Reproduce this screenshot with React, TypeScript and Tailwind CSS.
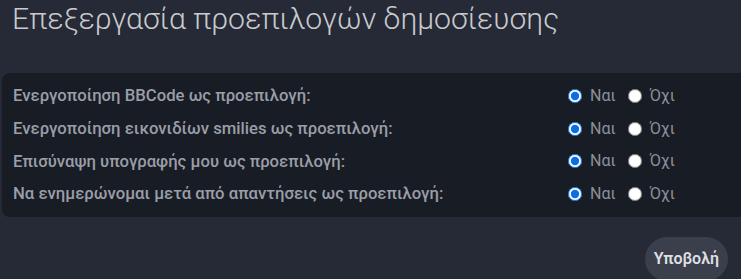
import { useState } from "react";

const options = [
  { id: "bbcode", label: "Ενεργοποίηση BBCode ως προεπιλογή:" },
  { id: "smilies", label: "Ενεργοποίηση εικονιδίων smilies ως προεπιλογή:" },
  { id: "sig", label: "Επισύναψη υπογραφής μου ως προεπιλογή:" },
  { id: "notify", label: "Να ενημερώνομαι μετά από απαντήσεις ως προεπιλογή:" },
];

function OptionRow({ id, label }: { id: string; label: string }) {
  const [value, setValue] = useState(true);
  return (
    <div className="flex flex-row items-center h-[32.7px]">
      <p className="pl-[11px] flex-1 font-medium text-[16.7px] text-[#9a9ea7]">{label}</p>
      <div className="flex flex-row items-center w-[173px] text-[16px] text-[#8d9099]">
        <label className="flex items-center gap-[8px] mr-[12px]">
          <input
            type="radio"
            name={id}
            checked={value}
            onChange={() => setValue(true)}
            className="m-0 w-[14px] h-[14px] accent-[#0b6ee3]"
          />
          Ναι
        </label>
        <label className="flex items-center gap-[8px]">
          <input
            type="radio"
            name={id}
            checked={!value}
            onChange={() => setValue(false)}
            className="m-0 w-[14px] h-[14px] accent-[#0b6ee3]"
          />
          Όχι
        </label>
      </div>
    </div>
  );
}

export default function App() {
  return (
    <div className="w-[741px] h-[279px] overflow-hidden bg-[#252a36] font-['Roboto',sans-serif]">
      <h2 className="pl-[12px] pt-[1px] text-[30.2px] leading-[36px] font-light text-[#c9cacd]">
        Επεξεργασία προεπιλογών δημοσίευσης
      </h2>
      <div className="mt-[36px] ml-[2px] rounded-l-lg bg-[#181c25] py-[6.5px]">
        {options.map((o) => (
          <OptionRow key={o.id} {...o} />
        ))}
      </div>
      <div className="flex flex-row justify-end pr-[13px] mt-[20px]">
        <button className="rounded-full bg-[#3a3f4b] px-[9px] h-[44px] font-semibold text-[16px] text-[#dedfe2]">
          Υποβολή
        </button>
      </div>
    </div>
  );
}
